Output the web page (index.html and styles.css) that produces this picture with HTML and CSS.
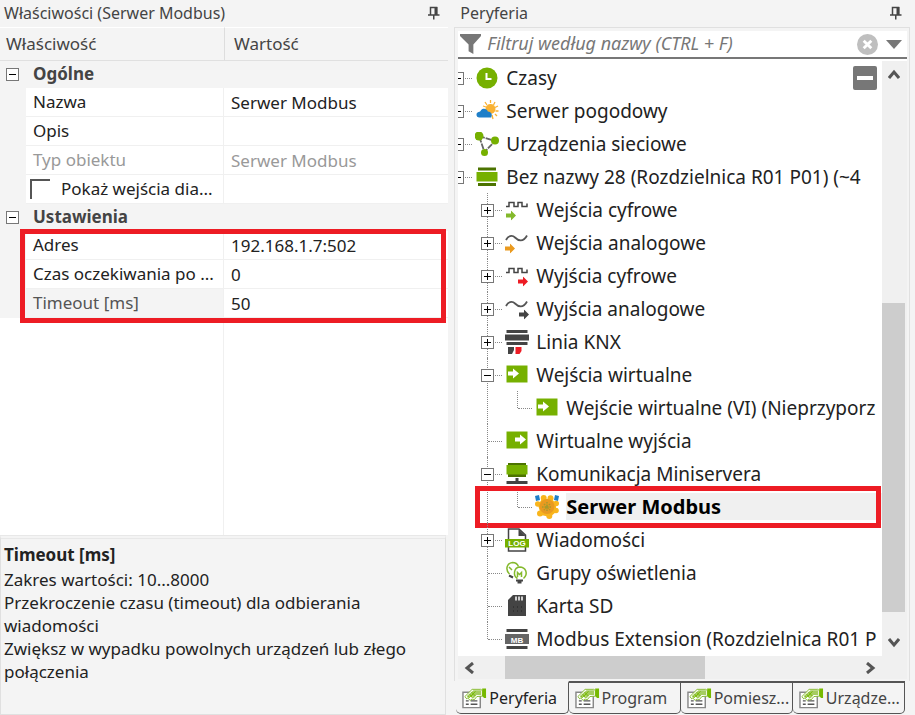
FILE: index.html
```html
<!DOCTYPE html>
<html lang="pl">
<head>
	<meta charset="utf-8">
	<meta name="viewport" content="width=device-width, initial-scale=1.0">
	<title>Serwer Modbus</title>
	<link rel="stylesheet" href="styles.css">
</head>
<body>
	<!-- shared icons -->
	<svg width="0" height="0" class="sprite">
		<symbol id="pin" viewBox="0 0 12 14">
			<path d="M2.5 8.500V1.500h6v7M0 9h11.500M5.750 9v4.500" fill="none" stroke="#444" stroke-width="1.500"/>
			<path d="M6.500 1h3v8h-3z" fill="#444"/>
		</symbol>
		<symbol id="props" viewBox="0 0 26 24">
			<path d="M1 6h18v16H1z" fill="#fff" stroke="#888" stroke-width="1.500"/>
			<path d="M4 15h3M4 18.500h3M9 15h7M9 18.500h7" stroke="#555" stroke-width="1.500"/>
			<path d="M3 10.500L10.500 3h9l2 1.500v5.500l-6 .5-3 3.500-2-1-2 1.500-2.500-2.500-1 1z" fill="#fff" stroke="#84b92c"/>
			<path d="M5 10l7-6h8v5h-5l-3 3.500-2-3-3 2.500z" fill="#a5cc60"/>
			<path d="M6 10l2 2M8 8l3 4M10 6l4 4M8.500 11L14 5" stroke="#76b900"/>
			<path d="M21 2h4v10h-2l-2-2z" fill="#76b900"/>
		</symbol>
		<symbol id="pulse" viewBox="0 0 24 24">
			<path d="M1 8.500h3v-4h5v4h4v-4h4v4h5v-3" fill="none" stroke="#444" stroke-width="1.500"/>
		</symbol>
		<symbol id="wave" viewBox="0 0 24 24">
			<path d="M1 9C3 5 7 3.500 10 6.500S18 12 22 4.500" fill="none" stroke="#555" stroke-width="1.800"/>
		</symbol>
		<symbol id="arrow" viewBox="0 0 10 10">
			<path d="M0 3h5V0l5 5-5 5V7H0z" fill="currentColor"/>
		</symbol>
	</svg>

	<div class="app">
		<section class="panel properties">
			<header class="panel-title">
				<h1>Właściwości (Serwer Modbus)</h1>
				<button class="pin" aria-label="Przypnij"><svg><use href="#pin"/></svg></button>
			</header>
			<div class="grid-area">
				<table class="props">
					<colgroup><col class="col-gutter"><col class="col-name"><col></colgroup>
					<thead>
						<tr><th colspan="2">Właściwość</th><th>Wartość</th></tr>
					</thead>
					<tbody>
						<tr class="group"><td><button class="toggle" aria-label="Zwiń Ogólne"></button></td><th colspan="2">Ogólne</th></tr>
						<tr><td></td><th><label for="nazwa">Nazwa</label></th><td><input id="nazwa" type="text" value="Serwer Modbus"></td></tr>
						<tr><td></td><th><label for="opis">Opis</label></th><td><input id="opis" type="text"></td></tr>
						<tr class="disabled"><td></td><th><label for="typ">Typ obiektu</label></th><td><input id="typ" type="text" value="Serwer Modbus" disabled></td></tr>
						<tr><td></td><th><label class="check"><input type="checkbox">Pokaż wejścia dia...</label></th><td></td></tr>
						<tr class="group"><td><button class="toggle" aria-label="Zwiń Ustawienia"></button></td><th colspan="2">Ustawienia</th></tr>
					</tbody>
					<tbody class="marked">
						<tr><td></td><th><label for="adres">Adres</label></th><td><input id="adres" type="text" value="192.168.1.7:502"></td></tr>
						<tr><td></td><th><label for="czas">Czas oczekiwania po ...</label></th><td><input id="czas" type="text" value="0"></td></tr>
						<tr class="selected"><td></td><th><label for="timeout">Timeout [ms]</label></th><td><input id="timeout" type="text" value="50"></td></tr>
					</tbody>
				</table>
				<div class="grid-rest"></div>
			</div>
			<div class="hint">
				<h2>Timeout [ms]</h2>
				<p>Zakres wartości: 10...8000</p>
				<p>Przekroczenie czasu (timeout) dla odbierania wiadomości</p>
				<p>Zwiększ w wypadku powolnych urządzeń lub złego połączenia</p>
			</div>
		</section>

		<section class="panel periphery">
			<header class="panel-title">
				<h1>Peryferia</h1>
				<button class="pin" aria-label="Przypnij"><svg><use href="#pin"/></svg></button>
			</header>
			<div class="frame">
				<div class="filter">
					<svg class="funnel" viewBox="0 0 22 22"><path d="M0 0h22v2l-8 9v10l-5-3v-7L0 2z" fill="#777"/></svg>
					<input type="text" placeholder="Filtruj według nazwy (CTRL + F)" aria-label="Filtruj według nazwy">
					<button class="clear" aria-label="Wyczyść"><svg viewBox="0 0 22 22"><circle cx="11" cy="11" r="11" fill="#bfbfbf"/><path d="M7 7l8 8M15 7l-8 8" stroke="#fff" stroke-width="3"/></svg></button>
					<button class="more" aria-label="Opcje filtra"><svg viewBox="0 0 16 9"><path d="M0 0h16L8 9z" fill="#777"/></svg></button>
				</div>
				<div class="viewport">
					<div class="tree-box">
						<button class="collapse-all" aria-label="Zwiń wszystko"></button>
						<ul class="tree">
							<li><div class="row"><span class="joint"><button class="toggle closed" aria-label="Rozwiń"></button></span>
								<svg class="icon" viewBox="0 0 24 24"><circle cx="12" cy="12" r="10.500" fill="#76b000"/><path d="M11.500 7v6h5" fill="none" stroke="#fff" stroke-width="2"/></svg>
								<span>Czasy</span></div></li>
							<li><div class="row"><span class="joint"><button class="toggle closed" aria-label="Rozwiń"></button></span>
								<svg class="icon" viewBox="0 0 24 24"><circle cx="15.500" cy="10" r="5" fill="#f9b233"/><path d="M15.500 1v3M20 3l-1.500 3M23 7l-3 1.500M20.500 12h3M20 15l2 2M17 16l1 4M10 3l2 3M8 7l3 1" stroke="#f9b233" stroke-width="1.300"/><path d="M4 18.500a2.800 2.800 0 0 1-.5-5.500c1.500-.3 1.800-.8 2.500-1.800 2-2.500 6-1.800 6.800 1.300 2 0 4 1.500 4 3.500l-.5 2.500z" fill="#1f7fc9"/></svg>
								<span>Serwer pogodowy</span></div></li>
							<li><div class="row"><span class="joint"><button class="toggle closed" aria-label="Rozwiń"></button></span>
								<svg class="icon" viewBox="0 0 24 24"><path d="M4 4l16 5-10.500 11z" fill="none" stroke="#666" stroke-width="1.800" stroke-dasharray="6 1"/><circle cx="4" cy="4" r="4.500" fill="#76b000"/><circle cx="20" cy="8.500" r="4" fill="#76b000"/><circle cx="9.500" cy="20.500" r="3.500" fill="#76b000"/></svg>
								<span>Urządzenia sieciowe</span></div></li>
							<li><div class="row"><span class="joint"><button class="toggle" aria-label="Zwiń"></button></span>
								<svg class="icon" viewBox="0 0 24 24"><path d="M3 2.500h18v3H3zM3 18h18v3H3z" fill="#4c7300"/><path d="M1.500 7h21v9.500h-21z" fill="#76b000"/></svg>
								<span>Bez nazwy 28 (Rozdzielnica R01 P01) (~4</span></div>
								<ul>
									<li><div class="row"><span class="joint"><button class="toggle closed" aria-label="Rozwiń"></button></span>
										<svg class="icon" viewBox="0 0 24 24"><use href="#pulse"/><use href="#arrow" x="1" y="12.500" width="10" height="10" color="#84b92c"/></svg>
										<span>Wejścia cyfrowe</span></div></li>
									<li><div class="row"><span class="joint"><button class="toggle closed" aria-label="Rozwiń"></button></span>
										<svg class="icon" viewBox="0 0 24 24"><use href="#wave"/><use href="#arrow" x="0" y="12.500" width="10" height="10" color="#ea9a1f"/></svg>
										<span>Wejścia analogowe</span></div></li>
									<li><div class="row"><span class="joint"><button class="toggle closed" aria-label="Rozwiń"></button></span>
										<svg class="icon" viewBox="0 0 24 24"><use href="#pulse"/><use href="#arrow" x="13" y="12.500" width="10" height="10" color="#ed1c24"/></svg>
										<span>Wyjścia cyfrowe</span></div></li>
									<li><div class="row"><span class="joint"><button class="toggle closed" aria-label="Rozwiń"></button></span>
										<svg class="icon" viewBox="0 0 24 24"><use href="#wave"/><use href="#arrow" x="14" y="12.500" width="10" height="10" color="#444"/></svg>
										<span>Wyjścia analogowe</span></div></li>
									<li><div class="row"><span class="joint"><button class="toggle closed" aria-label="Rozwiń"></button></span>
										<svg class="icon" viewBox="0 0 24 24"><path d="M1.500 0h21v3h-21zM0 4.500h24v6H0zM1.500 12h21v3h-21zM3 17h6v3l-2 4H3z" fill="#444"/><path d="M10.500 17h6v4l-2 3h-4z" fill="#ed1c24"/></svg>
										<span>Linia KNX</span></div></li>
									<li><div class="row"><span class="joint"><button class="toggle" aria-label="Zwiń"></button></span>
										<svg class="icon" viewBox="0 0 24 24"><path d="M1.500 2.500h21v17h-21z" fill="#76b000"/><path d="M3 8.500h5v-3l6 5-6 5v-3H3z" fill="#fff"/></svg>
										<span>Wejścia wirtualne</span></div>
										<ul>
											<li><div class="row"><span class="joint"></span>
												<svg class="icon" viewBox="0 0 24 24"><path d="M1.500 2.500h21v17h-21z" fill="#76b000"/><path d="M3 8.500h5v-3l6 5-6 5v-3H3z" fill="#fff"/></svg>
												<span>Wejście wirtualne (VI) (Nieprzyporz</span></div></li>
										</ul>
									</li>
									<li><div class="row"><span class="joint"></span>
										<svg class="icon" viewBox="0 0 24 24"><path d="M1.500 2.500h21v17h-21z" fill="#76b000"/><path d="M10 8.500h5v-3l6 5-6 5v-3h-5z" fill="#fff"/></svg>
										<span>Wirtualne wyjścia</span></div></li>
									<li><div class="row"><span class="joint"><button class="toggle" aria-label="Zwiń"></button></span>
										<svg class="icon" viewBox="0 0 24 24"><path d="M3 1h18v3H3zM3 11.500h18V15H3z" fill="#4c7300"/><path d="M1.500 3h21v9.500h-21z" fill="#76b000"/><path d="M1.500 19h21v3h-21zM10.500 16h3v3h-3z" fill="#444"/></svg>
										<span>Komunikacja Miniservera</span></div>
										<ul>
											<li class="marked"><div class="row active"><span class="joint"></span>
												<svg class="icon" viewBox="0 0 24 24"><path d="M0 1l4-1 1 5-4 1zM24 1l-4-1-1 5 4 1z" fill="#1f7fc9"/><g fill="#f9b51c"><path d="M7 4h10l4 5v8l-6 5-9-2-3-10z"/><circle cx="8.700" cy="3" r="3"/><circle cx="15.500" cy="3.200" r="3"/><circle cx="2.800" cy="9" r="2.800"/><circle cx="21.200" cy="8.500" r="2.800"/><circle cx="5" cy="18.500" r="3"/><circle cx="14.300" cy="21" r="3"/><circle cx="21" cy="15.500" r="2.800"/></g><circle cx="12" cy="11.500" r="7.500" fill="#e99a20"/><path d="M7 12h10M12 7v10M9 9l6 6M15 9l-6 6" stroke="#a79a2c" stroke-width="1.500" stroke-dasharray="1.500 1"/></svg>
												<span>Serwer Modbus</span></div></li>
										</ul>
									</li>
									<li><div class="row"><span class="joint"><button class="toggle closed" aria-label="Rozwiń"></button></span>
										<svg class="icon" viewBox="0 0 24 24"><path d="M3.500 1H14l6.500 6v16h-17z" fill="#fff" stroke="#444" stroke-width="1.500"/><path d="M13.500 1v7h7z" fill="#444"/><path d="M0 11h24v8.500H0z" fill="#76b000"/><text x="12" y="18.300" class="tag">LOG</text></svg>
										<span>Wiadomości</span></div></li>
									<li><div class="row"><span class="joint"></span>
										<svg class="icon" viewBox="0 0 24 24"><g fill="none" stroke="#84b92c" stroke-width="1.500"><path d="M4.500 13C-.5 8 2.500 2 7.500 1.500c3 0 5 1.500 6 4"/><path d="M12.500 17.500c-5-3-3.500-11 2-11.500 6.500 0 9 7 4 11.500"/><path d="M12.500 16v-4.500l2 2 2-2V16M4 6l3 3"/></g><path d="M4 14.500l4 2M11 19.500h7M12.500 21.500h4" stroke="#444" stroke-width="2"/></svg>
										<span>Grupy oświetlenia</span></div></li>
									<li><div class="row"><span class="joint"></span>
										<svg class="icon" viewBox="0 0 24 24"><path d="M8 1h13v21H3V6z" fill="#444"/><path d="M11 2.500v4M14 2.500v4M17 2.500v4" stroke="#fff" stroke-width="1.500"/><path d="M8 13h9M8 17h9" stroke="#222" stroke-dasharray="1 3"/></svg>
										<span>Karta SD</span></div></li>
									<li><div class="row"><span class="joint"></span>
										<svg class="icon" viewBox="0 0 24 24"><path d="M1.500 2h21v3h-21zM1.500 19h21v3h-21z" fill="#444"/><path d="M0 7h24v10H0z" fill="#666"/><text x="12" y="15.500" class="tag">MB</text></svg>
										<span>Modbus Extension (Rozdzielnica R01 P</span></div></li>
								</ul>
							</li>
						</ul>
					</div>
					<div class="scroll vertical">
						<button aria-label="W górę"><svg viewBox="0 0 12 12"><path d="M1 9l5-6 5 6" /></svg></button>
						<i class="before"></i><i class="thumb"></i><i class="after"></i>
						<button aria-label="W dół"><svg viewBox="0 0 12 12"><path d="M1 3l5 6 5-6" /></svg></button>
					</div>
				</div>
				<div class="scroll horizontal">
					<button aria-label="W lewo"><svg viewBox="0 0 12 12"><path d="M9 1L3 6l6 5" /></svg></button>
					<i class="before"></i><i class="thumb"></i><i class="after"></i>
					<button aria-label="W prawo"><svg viewBox="0 0 12 12"><path d="M3 1l6 5-6 5" /></svg></button>
				</div>
			</div>
			<nav class="tabs">
				<button class="tab current"><svg><use href="#props"/></svg>Peryferia</button>
				<button class="tab"><svg><use href="#props"/></svg>Program</button>
				<button class="tab"><svg><use href="#props"/></svg>Pomiesz...</button>
				<button class="tab"><svg><use href="#props"/></svg>Urządze...</button>
			</nav>
		</section>
	</div>
</body>
</html>
```
FILE: styles.css
```css
* {
	box-sizing: border-box;
}
body {
	margin: 0;
	background-color: #f4f4f4;
	font-family: "Noto Sans", "Open Sans", sans-serif;
	font-size: 16px;
	color: #222;
}
h1, h2, p, ul {
	margin: 0;
	padding: 0;
}
button {
	margin: 0;
	padding: 0;
	border: none;
	background: none;
	font: inherit;
	color: inherit;
}
input {
	font: inherit;
	color: inherit;
}
.sprite {
	position: absolute;
}
.app {
	display: grid;
	grid-template-columns: 49fr 51fr;
	height: 100vh;
	min-height: 715px;
}
.panel {
	display: flex;
	flex-direction: column;
	min-width: 0;
}
.panel-title {
	display: flex;
	justify-content: space-between;
	align-items: center;
	height: 27px;
	padding: 0 8px 2px 4px;
	color: #444;
}
.panel-title h1 {
	font-size: 16px;
	font-weight: normal;
	line-height: 24px;
}
.pin {
	display: flex;
}
.pin svg {
	width: 12px;
	height: 14px;
}

/* property grid */
.grid-area {
	flex: 1;
	display: flex;
	flex-direction: column;
	background-color: #fff;
}
.props {
	width: 100%;
	table-layout: fixed;
	border-collapse: separate;
	border-spacing: 0;
	font-size: 17px;
	line-height: 22px;
}
.col-gutter {
	width: 26px;
}
.col-name {
	width: 198px;
}
.props th, .props td {
	height: 29px;
	padding: 0;
	text-align: left;
	font-weight: normal;
	white-space: nowrap;
	overflow: hidden;
	border-bottom: 1px solid #f0f0f0;
}
.props td:first-child {
	background-color: #f4f4f4;
	border-color: #f4f4f4;
}
.props tbody th {
	padding-left: 7px;
	border-right: 1px solid #f0f0f0;
}
.props thead th {
	height: 34px;
	padding-left: 6px;
	color: #444;
	background-color: #f4f4f4;
	border-top: 1px solid #fff;
	border-bottom: 1px solid #e0e0e0;
}
.props thead th + th {
	padding-left: 9px;
	border-left: 1px solid #ddd;
}
.props .group th, .props .group td {
	height: 27px;
	background-color: #f4f4f4;
	border-color: #f4f4f4;
}
.props .group th {
	font-weight: bold;
	color: #444;
}
.props .group .toggle {
	margin-left: 6px;
}
.props input[type="text"] {
	display: block;
	width: 100%;
	height: 24px;
	padding: 0 0 0 7px;
	border: none;
	background: none;
}
.props .disabled {
	color: #999;
}
.props .selected th {
	color: #555;
	background-color: #f4f4f4;
}
.check {
	display: flex;
	align-items: center;
	margin-left: -3px;
}
.check input {
	appearance: none;
	width: 20px;
	height: 20px;
	margin: 0 11px 0 0;
	border: 1px solid #555;
	border-width: 2px 0 0 2px;
}
.grid-rest {
	flex: 1;
	width: 224px;
	border-right: 1px solid #f0f0f0;
}
.hint {
	height: 180px;
	margin-right: 2px;
	padding: 3px;
	border: 1px solid #e0e0e0;
	border-top: 4px double #e8e8e8;
	font-size: 17px;
	line-height: 23px;
}
.hint h2 {
	font-size: 17px;
	line-height: 26px;
}

.toggle {
	display: block;
	position: relative;
	width: 13px;
	height: 13px;
	border: 1px solid #777;
	background-color: #fff;
}
.toggle::before, .toggle.closed::after {
	content: "";
	position: absolute;
	top: 5px;
	left: 2px;
	width: 7px;
	height: 1px;
	background-color: #000;
}
.toggle.closed::after {
	transform: rotate(90deg);
}

/* red frame around the fields being described */
.marked {
	position: relative;
}
.marked::after {
	content: "";
	position: absolute;
	top: -2px;
	right: 2px;
	bottom: -5px;
	left: 20px;
	border: 5px solid #ed1c24;
	pointer-events: none;
}
.tree .marked::after {
	top: -4px;
	right: 1px;
	bottom: -5px;
	left: -27px;
}

/* periphery tree */
.periphery {
	padding: 0 5px 0 6px;
}
.periphery .panel-title {
	padding-left: 6px;
}
.frame {
	flex: 1;
	display: flex;
	flex-direction: column;
	min-height: 0;
	padding: 3px 2px 2px 3px;
	border: 1px solid #e0e0e0;
	border-bottom: none;
}
.filter {
	display: flex;
	align-items: center;
	height: 28px;
	padding: 0 5px 0 2px;
	background-color: #fff;
	border-bottom: 2px solid #777;
}
.filter input {
	flex: 1;
	min-width: 0;
	height: 24px;
	padding: 0 0 2px 6px;
	border: none;
	background: none;
	font-size: 18px;
	font-style: italic;
}
.filter input::placeholder {
	color: #777;
}
.filter button {
	display: flex;
}
.funnel, .clear svg {
	width: 21px;
	height: 21px;
}
.more {
	margin-left: 8px;
}
.more svg {
	width: 16px;
	height: 9px;
}
.viewport {
	flex: 1;
	display: flex;
	min-height: 0;
	background-color: #fff;
}
.tree-box {
	flex: 1;
	position: relative;
	min-width: 0;
	overflow: hidden;
}
.collapse-all {
	position: absolute;
	z-index: 1;
	top: 7px;
	right: 5px;
	width: 24px;
	height: 24px;
	border: 10px solid #777;
	border-width: 10px 4px;
	border-radius: 2px;
	background-color: #fff;
}
.tree {
	margin: 2px 0 0 -16px;
	font-size: 19px;
	color: #222;
}
.tree, .tree ul {
	list-style: none;
}
.tree ul {
	padding-left: 30px;
}
.tree li {
	position: relative;
}
.tree ul > li::before {
	content: "";
	position: absolute;
	top: 0;
	bottom: 0;
	left: 15px;
	border-left: 1px dotted #888;
}
.tree ul > li:last-child::before {
	bottom: auto;
	height: 17px;
}
.row {
	display: flex;
	align-items: center;
	height: 33px;
	white-space: nowrap;
}
.joint {
	flex: none;
	display: flex;
	align-items: center;
	position: relative;
	width: 30px;
	height: 33px;
	padding: 2px 0 0 9px;
}
.joint::before {
	content: "";
	position: absolute;
	top: 17px;
	left: 16px;
	right: 0;
	border-top: 1px dotted #888;
}
.icon {
	flex: none;
	width: 24px;
	height: 24px;
	margin: 0 7px 0 3px;
}
.row.active span:last-child {
	flex: 1;
	font-size: 20px;
	font-weight: bold;
	color: #000;
	background-color: #f0f0f0;
}
.tag {
	font-family: "Liberation Sans", sans-serif;
	font-size: 8px;
	font-weight: bold;
	fill: #fff;
	text-anchor: middle;
}

.scroll {
	display: flex;
	flex: none;
	background-color: #f0f0f0;
}
.scroll.vertical {
	flex-direction: column;
	width: 25px;
	margin-top: 2px;
	padding-right: 2px;
}
.scroll.horizontal {
	height: 23px;
	padding-right: 25px;
}
.scroll button {
	display: flex;
	align-items: center;
	justify-content: center;
	flex: none;
	width: 24px;
	height: 23px;
}
.scroll.vertical button {
	height: 28px;
}
.scroll svg {
	width: 12px;
	height: 12px;
	fill: none;
	stroke: #555;
	stroke-width: 3;
}
.thumb {
	background-color: #cdcdcd;
}
.vertical .before { flex: 213; }
.vertical .thumb { flex: 308; }
.vertical .after { flex: 16; }
.horizontal .before { flex: 23; }
.horizontal .thumb { flex: 199; }
.horizontal .after { flex: 153; }

.tabs {
	display: flex;
	height: 34px;
	padding: 0 5px 0 2px;
	color: #444;
}
.tab {
	flex: 1;
	display: flex;
	align-items: center;
	min-width: 0;
	height: 33px;
	padding-left: 6px;
	border: 1px solid #555;
	border-width: 2px 1px 1px 0;
	border-radius: 0 0 5px 5px;
	white-space: nowrap;
}
.tab.current {
	border-top-color: transparent;
	color: #222;
}
.tab svg {
	flex: none;
	width: 25px;
	height: 24px;
	margin-right: 2px;
}
```
